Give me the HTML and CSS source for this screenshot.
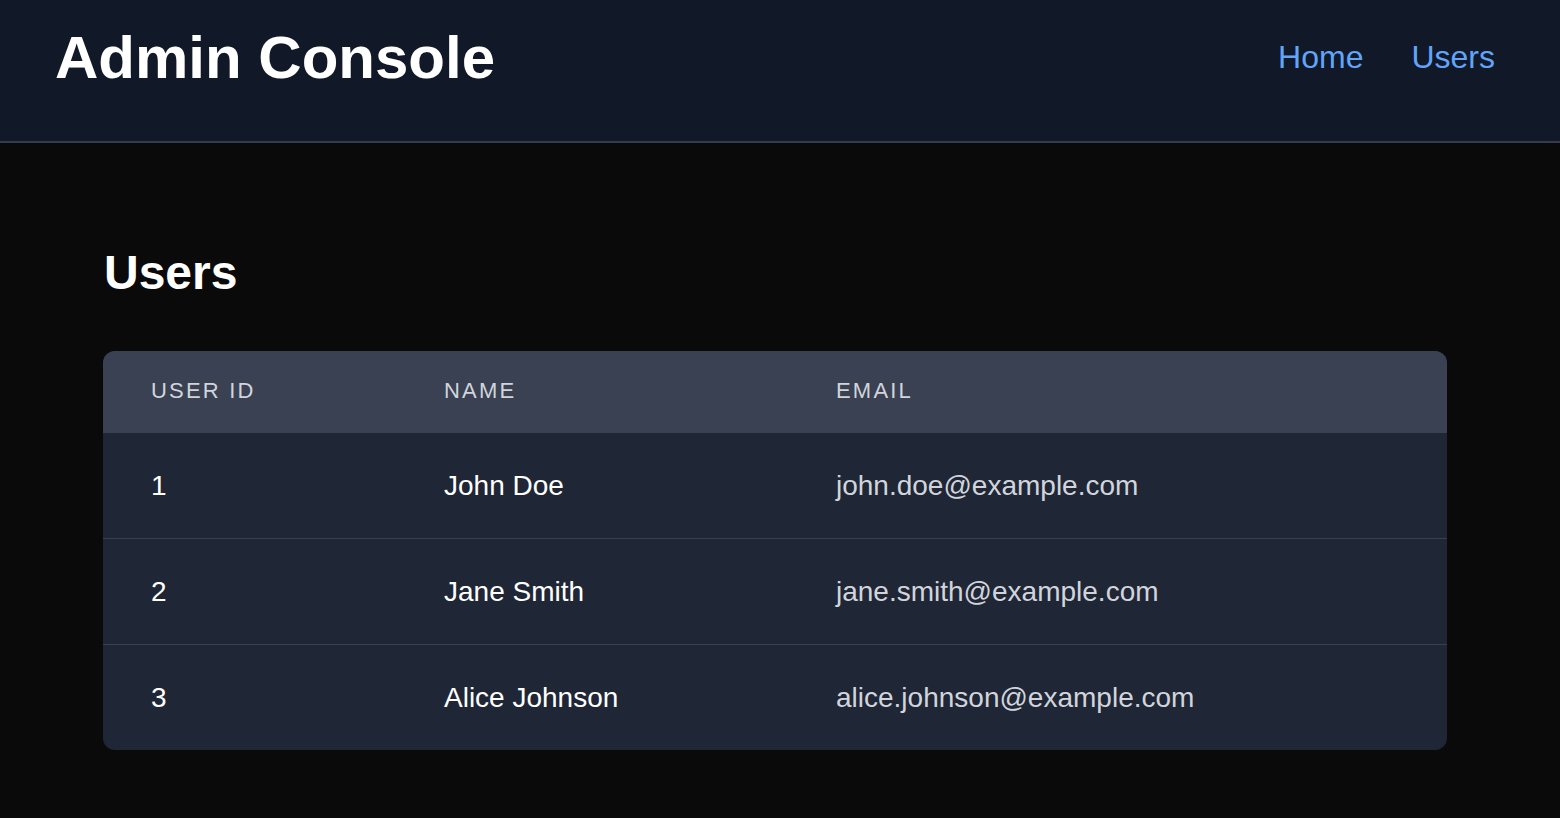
FILE: index.html
```html
<!DOCTYPE html>
<html lang="en">
<head>
<meta charset="utf-8">
<title>Admin Console</title>
<link rel="stylesheet" href="styles.css">
</head>
<body>
<header class="topbar">
  <h1 class="brand">Admin Console</h1>
  <nav class="nav">
    <a class="nav-link" href="#">Home</a>
    <a class="nav-link" href="#">Users</a>
  </nav>
</header>
<main class="main">
  <h2 class="page-title">Users</h2>
  <div class="table-card">
    <table class="users-table">
      <thead>
        <tr>
          <th class="col-id">User ID</th>
          <th class="col-name">Name</th>
          <th class="col-email">Email</th>
        </tr>
      </thead>
      <tbody>
        <tr>
          <td class="cell-id">1</td>
          <td class="cell-name">John Doe</td>
          <td class="cell-email">john.doe@example.com</td>
        </tr>
        <tr>
          <td class="cell-id">2</td>
          <td class="cell-name">Jane Smith</td>
          <td class="cell-email">jane.smith@example.com</td>
        </tr>
        <tr>
          <td class="cell-id">3</td>
          <td class="cell-name">Alice Johnson</td>
          <td class="cell-email">alice.johnson@example.com</td>
        </tr>
      </tbody>
    </table>
  </div>
</main>
</body>
</html>
```

FILE: styles.css
```css
* { box-sizing: border-box; }

html, body {
  margin: 0;
  padding: 0;
}

body {
  background: #0a0a0a;
  color: #ffffff;
  font-family: "Liberation Sans", Arial, sans-serif;
}

.topbar {
  display: flex;
  align-items: center;
  justify-content: space-between;
  background: #111827;
  padding: 23px 65px 49px 55px;
  border-bottom: 2px solid #353c4b;
  height: 143px;
}

.brand {
  margin: 0;
  font-size: 60px;
  line-height: 69px;
  font-weight: 700;
  color: #ffffff;
}

.nav {
  display: flex;
  gap: 48px;
}

.nav-link {
  color: #60a5fa;
  text-decoration: none;
  font-size: 32px;
  line-height: 37px;
}

.main {
  padding: 102px 113px 60px 103px;
}

.page-title {
  margin: 0 0 51px 1px;
  font-size: 48px;
  line-height: 55px;
  font-weight: 700;
  color: #ffffff;
}

.table-card {
  width: 1344px;
  border-radius: 12px;
  overflow: hidden;
  background: #1f2636;
}

.users-table {
  width: 100%;
  border-collapse: collapse;
  table-layout: fixed;
}

.users-table th {
  background: #3a4153;
  color: #d1d5db;
  font-weight: 400;
  font-size: 22px;
  line-height: 26px;
  letter-spacing: 0.1em;
  text-transform: uppercase;
  text-align: left;
  padding: 27px 48px 29px 48px;
}

.col-id { width: 293px; }
.col-name { width: 392px; }

.users-table td {
  font-size: 28px;
  line-height: 32px;
  padding: 36.5px 48px 36.5px 48px;
  text-align: left;
  color: #f3f4f6;
}

.users-table tbody tr {
  border-bottom: 1px solid #394052;
}

.users-table tbody tr:last-child {
  border-bottom: none;
}

.users-table td.cell-id { color: #ffffff; }
.users-table td.cell-name { color: #ffffff; }
.users-table td.cell-email { color: #d1d5db; }
```
